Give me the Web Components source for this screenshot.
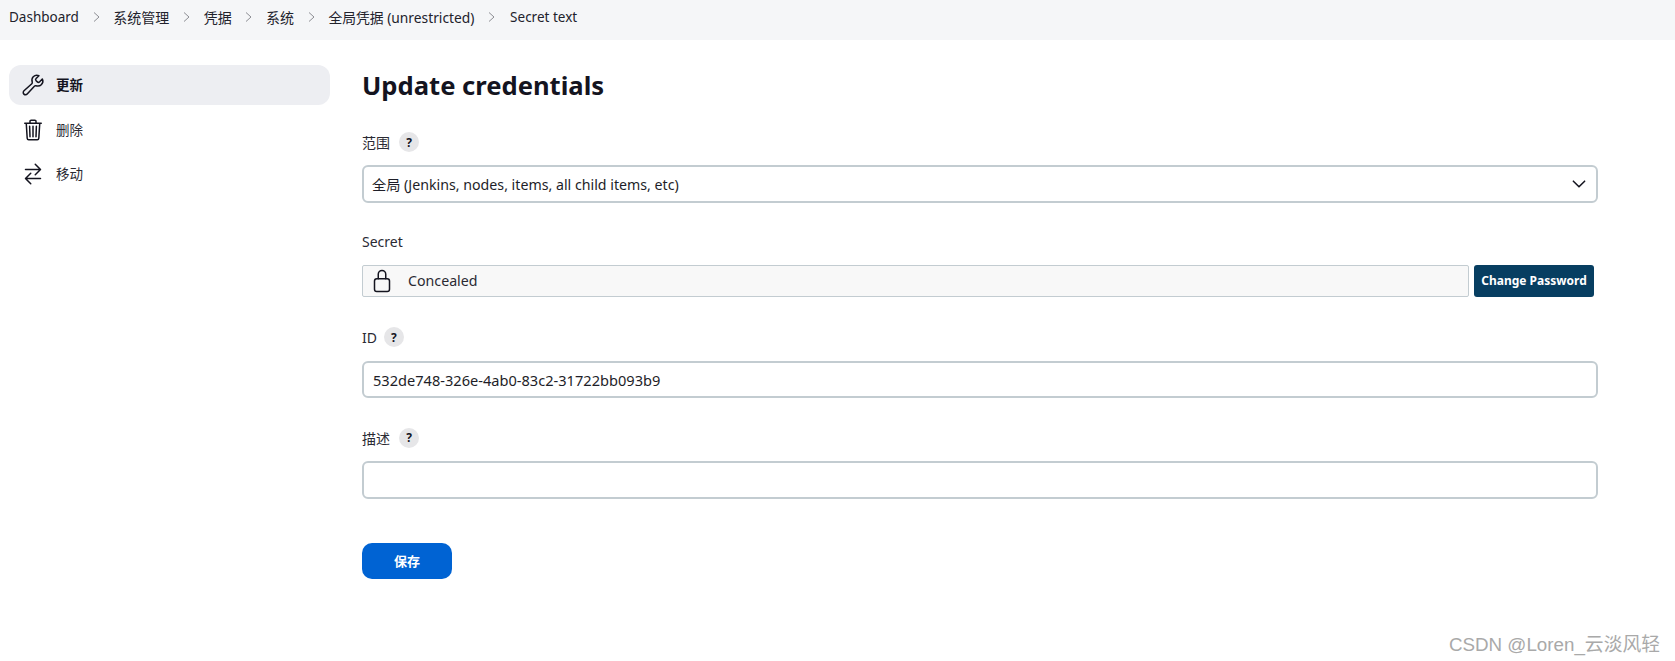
<!DOCTYPE html>
<html lang="zh">
<head>
<meta charset="utf-8">
<title>Update credentials</title>
<style>
  html, body { margin: 0; background: #fff; }
  body {
    font-family: "Noto Sans", "Noto Sans CJK SC", sans-serif;
    font-size: 14px;
    color: #14141f;
    height: 661px;
    overflow: hidden;
    position: relative;
  }
  .layout { display: flex; }
</style>
</head>
<body>
<jk-breadcrumbs>
  <jk-crumb>Dashboard</jk-crumb>
  <jk-crumb cjk>系统管理</jk-crumb>
  <jk-crumb cjk>凭据</jk-crumb>
  <jk-crumb cjk>系统</jk-crumb>
  <jk-crumb style="--crumb-size: 13.8px; --chevron-end: 14px">全局凭据 (unrestricted)</jk-crumb>
  <jk-crumb last>Secret text</jk-crumb>
</jk-breadcrumbs>
<div class="layout">
  <jk-sidebar>
    <jk-task icon="wrench" active>更新</jk-task>
    <jk-task icon="trash">删除</jk-task>
    <jk-task icon="move">移动</jk-task>
  </jk-sidebar>
  <jk-form-page heading="Update credentials">
    <jk-field label="范围" help gap="13" style="margin-bottom: 28.5px">
      <jk-select>全局 (Jenkins, nodes, items, all child items, etc)</jk-select>
    </jk-field>
    <jk-field label="Secret" gap="13" style="margin-bottom: 30.5px">
      <jk-secret></jk-secret>
    </jk-field>
    <jk-field label="ID" help gap="14" style="--help-gap: 7px">
      <jk-input height="37" value="532de748-326e-4ab0-83c2-31722bb093b9"></jk-input>
    </jk-field>
    <jk-field label="描述" help gap="13">
      <jk-input height="38"></jk-input>
    </jk-field>
    <jk-save>保存</jk-save>
  </jk-form-page>
</div>
<jk-watermark>CSDN @Loren_云淡风轻</jk-watermark>

<script>
const ICONS = {
  wrench: `<path d="M393.87 190a32.1 32.1 0 01-45.25 0l-26.57-26.57a32.09 32.09 0 010-45.26L382.19 58a1 1 0 00-.3-1.64c-38.82-16.64-89.15-8.16-121.11 23.57-30.59 30.35-32.32 76-21.12 115.84a31.93 31.93 0 01-9.06 32.08L64 380a48.17 48.17 0 1068 68l153.86-167a31.93 31.93 0 0131.6-9.13c39.54 10.59 84.54 8.6 114.72-21.19 32.49-32 39.5-88.56 23.75-120.93a1 1 0 00-1.6-.26z"/>`,
  trash: `<path d="M112 112l20 320c.95 18.49 14.4 32 32 32h184c17.67 0 30.87-13.51 32-32l20-320M80 112h352M192 112V72a23.93 23.93 0 0124-24h80a23.93 23.93 0 0124 24v40M256 176v224M184 176l8 224M328 176l-8 224"/>`,
  move: `<path d="M304 48l112 112-112 112M398.87 160H96M208 464L96 352l112-112M114 352h302"/>`
};

class JkBreadcrumbs extends HTMLElement {
  constructor() {
    super();
    this.attachShadow({ mode: "open" });
    this.shadowRoot.innerHTML = `
      <style>
        :host {
          display: flex;
          align-items: center;
          height: 40px;
          padding: 0 0 6px 9px;
          box-sizing: border-box;
          background: #f5f6f8;
        }
      </style>
      <slot></slot>
    `;
  }
}

class JkCrumb extends HTMLElement {
  constructor() {
    super();
    this.attachShadow({ mode: "open" });
    const chevron = this.hasAttribute("last") ? "" : `
      <svg width="9" height="12" viewBox="0 0 9 12"><path d="M2 1.5L7 6l-5 4.5" fill="none" stroke="#8d8e94" stroke-width="1"/></svg>`;
    this.shadowRoot.innerHTML = `
      <style>
        :host { display: flex; align-items: center; font-size: var(--crumb-size, 13.5px); white-space: nowrap; color: #22222c; }
        :host([cjk]) { font-size: 14px; }
        svg { margin: 0 var(--chevron-end, 12.7px) 0 12.7px; }
      </style>
      <slot></slot>${chevron}
    `;
  }
}

class JkSidebar extends HTMLElement {
  constructor() {
    super();
    this.attachShadow({ mode: "open" });
    this.shadowRoot.innerHTML = `
      <style>
        :host {
          display: flex;
          flex-direction: column;
          box-sizing: border-box;
          width: 362px;
          padding: 25px 32px 0 9px;
          flex: none;
        }
      </style>
      <slot></slot>
    `;
  }
}

class JkTask extends HTMLElement {
  constructor() {
    super();
    this.attachShadow({ mode: "open" });
    const icon = ICONS[this.getAttribute("icon")];
    this.shadowRoot.innerHTML = `
      <style>
        :host {
          display: flex;
          align-items: center;
          height: 40px;
          margin-bottom: 4.5px;
          padding-left: 12px;
          gap: 11px;
          border-radius: 12px;
          font-size: 13.5px;
          color: #2a2a33;
        }
        :host([active]) { background: #edeef2; font-weight: 700; color: #14141f; }
        svg { width: 24px; height: 24px; fill: none; stroke: #14141f; stroke-width: 32; stroke-linecap: round; stroke-linejoin: round; }
        span { padding-bottom: 2px; }
      </style>
      <svg viewBox="0 0 512 512">${icon}</svg>
      <span><slot></slot></span>
    `;
  }
}

class JkFormPage extends HTMLElement {
  constructor() {
    super();
    this.attachShadow({ mode: "open" });
    this.shadowRoot.innerHTML = `
      <style>
        :host { display: block; width: 1236px; padding-top: 28px; flex: none; }
        h1 { margin: 0 0 28px; font-size: 25.6px; line-height: 36px; font-weight: 700; color: #14141f; }
      </style>
      <h1></h1>
      <slot></slot>
    `;
    this.shadowRoot.querySelector("h1").textContent = this.getAttribute("heading");
  }
}

class JkField extends HTMLElement {
  constructor() {
    super();
    this.attachShadow({ mode: "open" });
    const help = this.hasAttribute("help") ? `<span class="help">?</span>` : "";
    this.shadowRoot.innerHTML = `
      <style>
        :host { display: block; margin-bottom: 29.5px; }
        .label { display: flex; align-items: center; gap: var(--help-gap, 9px); height: 20px; font-size: 14px; color: #2a2a33; }
        .help {
          display: flex; align-items: center; justify-content: center;
          width: 20px; height: 20px; border-radius: 50%;
          background: #e6e6e8; font-size: 12px; font-weight: 700; color: #14141f;
        }
      </style>
      <div class="label"><span></span>${help}</div>
      <slot></slot>
    `;
    this.shadowRoot.querySelector(".label span").textContent = this.getAttribute("label");
    this.shadowRoot.querySelector(".label").style.marginBottom = (this.getAttribute("gap") || 12) + "px";
  }
}

class JkSelect extends HTMLElement {
  constructor() {
    super();
    this.attachShadow({ mode: "open" });
    this.shadowRoot.innerHTML = `
      <style>
        :host {
          display: flex; align-items: center; justify-content: space-between;
          height: 38px; box-sizing: border-box;
          border: 2px solid #c3ccd1; border-radius: 6px;
          padding: 0 7px 0 8px;
          font-size: 14.2px; color: #1e1e28;
        }
        svg { width: 20px; height: 20px; fill: none; stroke: #14141f; stroke-width: 40; stroke-linecap: round; stroke-linejoin: round; }
      </style>
      <slot></slot>
      <svg viewBox="0 0 512 512"><path d="M112 184l144 144 144-144"/></svg>
    `;
  }
}

class JkInput extends HTMLElement {
  constructor() {
    super();
    this.attachShadow({ mode: "open" });
    this.shadowRoot.innerHTML = `
      <style>
        :host {
          display: flex; align-items: center;
          box-sizing: border-box;
          border: 2px solid #c3ccd1; border-radius: 6px;
          padding: 0 9px;
          font-size: 14.6px; color: #1e1e28;
        }
      </style>
      <span></span>
    `;
    this.style.height = this.getAttribute("height") + "px";
    this.shadowRoot.querySelector("span").textContent = this.getAttribute("value") || "";
  }
}

class JkSecret extends HTMLElement {
  constructor() {
    super();
    this.attachShadow({ mode: "open" });
    this.shadowRoot.innerHTML = `
      <style>
        :host { display: flex; gap: 5px; height: 32px; width: 1232px; }
        .box {
          flex: none; width: 1107px; box-sizing: border-box;
          display: flex; align-items: center; gap: 14px;
          padding-left: 7px;
          background: #f8f8f8; border: 1px solid #c3ccd1; border-radius: 2px;
          font-size: 14.2px; color: #2a2a33;
        }
        svg { width: 24px; height: 24px; fill: none; stroke: #14141f; stroke-width: 32; stroke-linecap: round; stroke-linejoin: round; }
        button {
          flex: none; width: 120px; height: 32px; padding: 0;
          background: #073e61; color: #fff; border: 0; border-radius: 3px;
          font: 700 12px "Noto Sans", sans-serif;
        }
      </style>
      <div class="box">
        <svg viewBox="0 0 512 512"><path d="M336 208v-95a80 80 0 00-160 0v95"/><rect x="96" y="208" width="320" height="272" rx="48"/></svg>
        <span>Concealed</span>
      </div>
      <button>Change Password</button>
    `;
  }
}

class JkSave extends HTMLElement {
  constructor() {
    super();
    this.attachShadow({ mode: "open" });
    this.shadowRoot.innerHTML = `
      <style>
        :host {
          display: flex; align-items: center; justify-content: center;
          width: 90px; height: 36px; margin-top: 44px;
          background: #0063d3; color: #fff; border-radius: 10px;
          font-size: 13px; font-weight: 700;
        }
      </style>
      <slot></slot>
    `;
  }
}

class JkWatermark extends HTMLElement {
  constructor() {
    super();
    this.attachShadow({ mode: "open" });
    this.shadowRoot.innerHTML = `
      <style>
        :host {
          position: absolute; right: 15px; top: 629px;
          font: 18.8px "Liberation Sans", "Noto Sans CJK SC", sans-serif;
          color: #a9a9a9; white-space: nowrap;
        }
      </style>
      <slot></slot>
    `;
  }
}

customElements.define("jk-breadcrumbs", JkBreadcrumbs);
customElements.define("jk-crumb", JkCrumb);
customElements.define("jk-sidebar", JkSidebar);
customElements.define("jk-task", JkTask);
customElements.define("jk-form-page", JkFormPage);
customElements.define("jk-field", JkField);
customElements.define("jk-select", JkSelect);
customElements.define("jk-input", JkInput);
customElements.define("jk-secret", JkSecret);
customElements.define("jk-save", JkSave);
customElements.define("jk-watermark", JkWatermark);
</script>
</body>
</html>
